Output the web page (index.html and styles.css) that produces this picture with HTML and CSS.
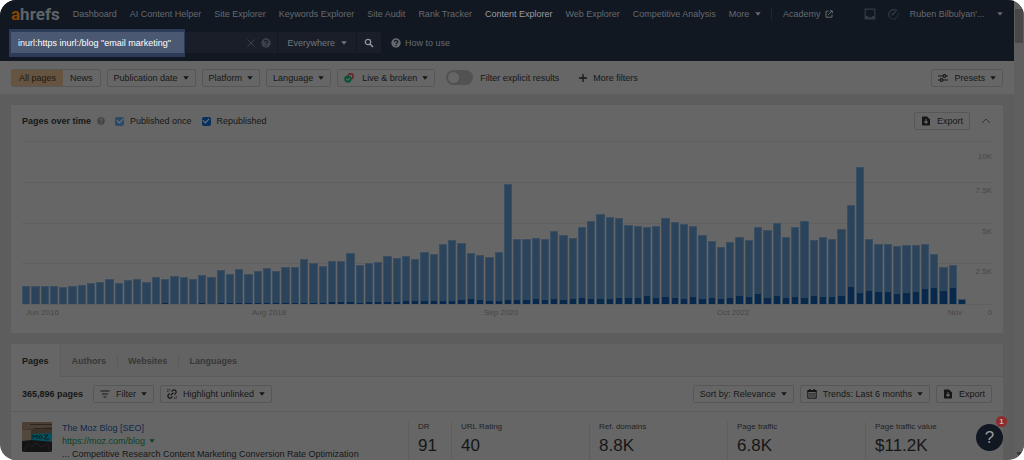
FILE: index.html
```html
<!DOCTYPE html>
<html lang="en">
<head>
<meta charset="utf-8">
<title>Content Explorer</title>
<link rel="stylesheet" href="styles.css">
</head>
<body>
<svg class="sprite" aria-hidden="true">
  <symbol id="caret" viewBox="0 0 6 4"><path d="M.3.3h5.4L3 3.8z" fill="currentColor"/></symbol>
  <symbol id="help" viewBox="0 0 10 10"><circle cx="5" cy="5" r="4.7" fill="currentColor"/><path d="M3.4 4c0-2.2 3.3-2.1 3.3-.2C6.700 5 5 5 5 6.100" fill="none" stroke="var(--hole)" stroke-width="1.200"/><circle cx="5" cy="7.600" r=".75" fill="var(--hole)"/></symbol>
  <symbol id="file" viewBox="0 0 10 10"><path d="M1 1.300Q1 .5 1.800.5H6l3 3v5.200q0 .8-.8.8H1.800Q1 9.500 1 8.700z" fill="currentColor"/><path d="M5 3v4M3.300 5.500 5 7.200l1.700-1.700" fill="none" stroke="#666" stroke-width="1.100"/></symbol>
</svg>
<div class="screen">
  <div class="page">
    <header class="header">
      <nav class="nav">
        <a class="logo" href="#"><span class="logo-a">a</span>hrefs</a>
        <a href="#">Dashboard</a>
        <a href="#">AI Content Helper</a>
        <a href="#">Site Explorer</a>
        <a href="#">Keywords Explorer</a>
        <a href="#">Site Audit</a>
        <a href="#">Rank Tracker</a>
        <a class="current" href="#">Content Explorer</a>
        <a href="#">Web Explorer</a>
        <a href="#">Competitive Analysis</a>
        <a href="#">More <svg class="caret"><use href="#caret"/></svg></a>
        <a class="academy" href="#">Academy <svg class="icon-s" viewBox="0 0 8 8"><path d="M3.500 1.200H1v6h6V4.700M3 5l4-4M4.800.8h2.500v2.500" fill="none" stroke="currentColor"/></svg></a>
        <div class="account">
          <svg class="icon-l" viewBox="0 0 12 12"><path d="M1.200 1.200h9.600v9.600H1.200z" fill="none" stroke="currentColor" stroke-width="1.200"/><path d="M1 8h2.700l1 1.300h2.600l1-1.300H11v3H1z" fill="currentColor"/></svg>
          <svg class="icon-l" viewBox="0 0 12 12"><path d="M10 2.800A5 5 0 1 0 3.500 10.400" fill="none" stroke="currentColor" stroke-width="1.200"/><path d="M4.500 10.800A5 5 0 0 0 11 5" fill="none" stroke="currentColor" stroke-width="1.200" stroke-dasharray="1.500 1.200"/><path d="M5.200 6.700 8.700 3.500" stroke="currentColor" stroke-width="1.300"/><circle cx="5.500" cy="6.500" r="1.100" fill="currentColor"/></svg>
          <a class="user" href="#">Ruben Bilbulyan'... <svg class="caret"><use href="#caret"/></svg></a>
        </div>
      </nav>
      <form class="search">
        <div class="query">
          <input type="text" aria-label="Search query" value="inurl:https inurl:/blog &quot;email marketing&quot;">
          <button type="button" class="plain" aria-label="Clear"><svg class="icon" viewBox="0 0 10 10"><path d="m1.500 1.500 7 7m0-7-7 7" stroke="currentColor"/></svg></button>
          <svg class="icon"><use href="#help"/></svg>
        </div>
        <button type="button" class="scope">Everywhere <svg class="caret"><use href="#caret"/></svg></button>
        <button type="button" class="go" aria-label="Search"><svg class="icon" viewBox="0 0 10 10"><circle cx="4" cy="4" r="2.700" fill="none" stroke="currentColor" stroke-width="1.300"/><path d="m6 6 3 3" stroke="currentColor" stroke-width="1.600"/></svg></button>
        <a class="howto" href="#"><svg class="icon"><use href="#help"/></svg>How to use</a>
      </form>
    </header>

    <div class="filters">
      <div class="segment"><button type="button" class="on">All pages</button><button type="button">News</button></div>
      <button type="button" class="btn">Publication date <svg class="caret"><use href="#caret"/></svg></button>
      <button type="button" class="btn">Platform <svg class="caret"><use href="#caret"/></svg></button>
      <button type="button" class="btn">Language <svg class="caret"><use href="#caret"/></svg></button>
      <button type="button" class="btn live"><svg class="icon" viewBox="0 0 10 10"><circle cx="6.700" cy="3.300" r="2.500" fill="none" stroke="#6d1f24" stroke-width="1.500"/><circle cx="3.900" cy="6.100" r="3.700" fill="#0b5135"/><path d="m2.300 6.100 1.200 1.200 2.200-2.300" fill="none" stroke="#777"/></svg>Live &amp; broken <svg class="caret"><use href="#caret"/></svg></button>
      <label class="explicit"><input class="switch" type="checkbox" role="switch">Filter explicit results</label>
      <button type="button" class="plain more"><svg class="icon" viewBox="0 0 10 10"><path d="M5 1v8M1 5h8" stroke="currentColor" stroke-width="1.300"/></svg>More filters</button>
      <button type="button" class="btn presets"><svg class="icon" viewBox="0 0 10 10"><path d="M0 3h5m3 0h2M0 7h2m3 0h5" stroke="currentColor" stroke-width="1.200"/><circle cx="6.500" cy="3" r="1.400" fill="none" stroke="currentColor" stroke-width="1.100"/><circle cx="3.500" cy="7" r="1.400" fill="none" stroke="currentColor" stroke-width="1.100"/></svg>Presets <svg class="caret"><use href="#caret"/></svg></button>
    </div>

    <main class="content">
      <section class="card chart-card">
        <div class="chart-head">
          <h2>Pages over time</h2>
          <svg class="icon-m"><use href="#help"/></svg>
          <label><input class="tick once" type="checkbox" checked>Published once</label>
          <label><input class="tick again" type="checkbox" checked>Republished</label>
          <button type="button" class="btn export"><svg class="icon"><use href="#file"/></svg>Export</button>
          <button type="button" class="plain fold" aria-label="Collapse"><svg class="icon" viewBox="0 0 10 10"><path d="M1 7l4-4 4 4" fill="none" stroke="currentColor"/></svg></button>
        </div>
        <div class="chart">
          <div class="grid"><span>10K</span><span>7.5K</span><span>5K</span><span>2.5K</span></div>
          <div class="bars" id="bars"></div>
        </div>
        <div class="axis"><span>Jun 2016</span><span>Aug 2018</span><span>Sep 2020</span><span>Oct 2022</span><span>Nov</span><span class="zero">0</span></div>
      </section>

      <section class="card">
        <div class="tabs">
          <button type="button" class="tab active">Pages</button>
          <button type="button" class="tab">Authors</button>
          <button type="button" class="tab">Websites</button>
          <button type="button" class="tab">Languages</button>
        </div>
        <div class="toolbar">
          <strong>365,896 pages</strong>
          <button type="button" class="btn"><svg class="icon" viewBox="0 0 10 10"><path d="M.5 2h9M2 5h6M3.500 8h3" stroke="currentColor" stroke-width="1.200"/></svg>Filter <svg class="caret"><use href="#caret"/></svg></button>
          <button type="button" class="btn"><svg class="icon" viewBox="0 0 10 10"><path d="M4.500 2.500 5.800 1.300q1.500-1 2.700.2t.2 2.700L7.400 5.500M5.500 7.500 4.200 8.700q-1.500 1-2.700-.2t-.2-2.700L2.600 4.500M3.600 6.400l2.800-2.800" fill="none" stroke="currentColor" stroke-width="1.200"/><path d="M.3.800h1.200M.3 2.600h1M2.600.3v1M8.500 9.200h1.200M8.700 7.400h1M7.400 8.700v1" stroke="currentColor"/></svg>Highlight unlinked <svg class="caret"><use href="#caret"/></svg></button>
          <button type="button" class="btn sort">Sort by: Relevance <svg class="caret"><use href="#caret"/></svg></button>
          <button type="button" class="btn"><svg class="icon" viewBox="0 0 10 10"><path d="M.8 1.500h8.400v7.700H.8z" fill="none" stroke="currentColor"/><path d="M.5 2.300h9M2.800 0v2M7.200 0v2" stroke="currentColor" stroke-width="1.400"/><path d="M2.300 4.800h5.600M2.300 7h5.600" stroke="currentColor" stroke-width="1.200" stroke-dasharray="1.400 .7"/></svg>Trends: Last 6 months <svg class="caret"><use href="#caret"/></svg></button>
          <button type="button" class="btn"><svg class="icon"><use href="#file"/></svg>Export</button>
        </div>
        <article class="result">
          <svg class="thumb" viewBox="0 0 30 30">
            <rect width="30" height="30" fill="#3b3128"/><path d="M0 0h30v5L0 8z" fill="#4b3e34"/><path d="M8 2h22v1H8zM12 6h18v1H12z" fill="#2a2522"/><path d="M0 8h9v12H0z" fill="#51483e"/><path d="M10 12l20-1v8H10z" fill="#06505c"/><path d="M11 17v-4l2 2 2-2v4m2-2a1.500 1.500 0 1 0 3 0 1.500 1.500 0 1 0-3 0m5-2h4l-4 4h5" fill="none" stroke="#0a1a20"/><path d="M0 19l10-1 20 2v10H0z" fill="#141416"/><path d="M2 30l4-8 4 3 4-4 5 4 7-3 2 8" fill="none" stroke="#222122"/>
          </svg>
          <div class="summary">
            <a class="title" href="#">The Moz Blog [SEO]</a>
            <a class="url" href="#">https://moz.com/blog <svg class="caret"><use href="#caret"/></svg></a>
            <p>... Competitive Research Content Marketing Conversion Rate Optimization</p>
          </div>
          <dl class="metrics">
            <div><dt>DR</dt><dd>91</dd></div>
            <div><dt>URL Rating</dt><dd>40</dd></div>
            <div><dt>Ref. domains</dt><dd>8.8K</dd></div>
            <div><dt>Page traffic</dt><dd>6.8K</dd></div>
            <div><dt>Page traffic value</dt><dd>$11.2K</dd></div>
          </dl>
        </article>
      </section>
    </main>
  </div>
  <div class="scrollbar"><div class="thumb-bar"></div><svg class="caret"><use href="#caret"/></svg></div>
  <button type="button" class="help" aria-label="Help">?<span class="badge">1</span></button>
</div>
<script src="chart.js"></script>
</body>
</html>
```
FILE: styles.css
```css
* { box-sizing: border-box; }
body { margin: 0; background: #fff; color: #161616; font: 9px/12px "Liberation Sans", Arial, sans-serif; }
button, input { font: inherit; color: inherit; margin: 0; }
button { padding: 0; border: 0; background: none; white-space: nowrap; }
a { color: inherit; text-decoration: none; white-space: nowrap; }
h2, p, dl, dd { margin: 0; }
svg { flex: none; }
.sprite { position: absolute; width: 0; height: 0; }
.caret { width: 6px; height: 4px; margin-left: 3px; vertical-align: 1px; }
.icon { width: 10px; height: 10px; }
.icon-s { width: 8px; height: 8px; margin-left: 2px; vertical-align: -1px; }
.icon-m { width: 8px; height: 8px; margin-left: 1px; color: #444; --hole: #666; }
.icon-l { width: 12px; height: 12px; color: #343a43; }
.plain { display: flex; align-items: center; }

.screen { position: relative; display: flex; height: 100vh; overflow: hidden; border-radius: 16px; background: #5d5d5d; }
.page { flex: 1; min-width: 0; }

.header { height: 61px; padding: 0 11px; background: #111822; color: #666a70; }
.nav { display: flex; align-items: center; gap: 13px; height: 28px; }
.logo { font: bold 17px/18px Roboto, sans-serif; color: #5f6369; }
.logo-a { color: #874600; }
.current { color: #999da3; }
.academy { margin-left: -3px; padding-left: 11px; border-left: 1px solid #20262f; }
.account { display: flex; align-items: center; gap: 11px; margin-left: auto; }
.user .caret { margin-left: 10px; }

.search { display: flex; align-items: center; gap: 1px; margin-top: 4px; height: 21px; }
.query { display: flex; align-items: center; gap: 5px; width: 266px; height: 21px; padding-right: 6px; border-radius: 2px 0 0 2px; background: #191e28; color: #3e434b; --hole: #191e28; }
.query input { width: 176px; height: 28px; margin: -3px auto -4px -2px; padding: 0 0 0 7px; border: solid #2c3b57; border-width: 3px 1px 4px 2px; background: #4a5872; color: #fff; outline: 0; }
.scope, .go { height: 21px; background: #191e28; color: #73777d; }
.scope { width: 78px; }
.go { display: flex; align-items: center; justify-content: center; width: 24px; border-radius: 0 2px 2px 0; color: #92969b; }
.howto { display: flex; align-items: center; gap: 4px; margin-left: 9px; --hole: #111822; }

.filters { display: flex; align-items: center; gap: 6px; height: 33px; padding: 0 11px; background: #666; }
.btn { display: flex; align-items: center; height: 18px; padding: 0 6px; border: 1px solid #575757; border-radius: 2px; }
.btn > .icon { margin-right: 6px; }
.btn > .caret { margin-left: 5px; }
.segment { display: flex; height: 18px; border: 1px solid #575757; border-radius: 2px; }
.segment button { padding: 0 7px; }
.segment .on { background: #665340; color: #1e1812; }
.live > .icon { margin-right: 8px; }
.explicit { display: flex; align-items: center; gap: 7px; margin-left: 5px; }
.switch { appearance: none; display: flex; width: 27px; height: 15px; padding: 2px; border-radius: 8px; background: #525252; }
.switch::before { content: ""; width: 11px; height: 11px; border-radius: 50%; background: #666; }
.more { gap: 5px; margin-left: 13px; }
.presets { margin-left: auto; }

.content { display: flex; flex-direction: column; gap: 11px; padding: 11px 11px 0; }
.card { background: #666; }
.chart-card { padding: 0 11px 14px; }
.chart-head { display: flex; align-items: center; gap: 5px; height: 32px; }
.chart-head h2 { font-size: 9px; }
.chart-head label { display: flex; align-items: center; gap: 6px; margin-left: 5px; }
.tick { appearance: none; display: grid; place-items: center; width: 9px; height: 9px; border-radius: 2px; }
.tick::before { content: ""; width: 5px; height: 3px; border: solid #777; border-width: 0 0 1px 1px; transform: translateY(-1px) rotate(-45deg); }
.once { background: #2b4a68; }
.again { background: #08305c; }
.export { margin-left: auto; }
.fold { margin-left: 6px; width: 11px; color: #333; }
.chart { position: relative; display: flex; height: 164px; margin-top: 4px; border-bottom: 1px solid #5f5f5f; }
.grid { position: absolute; inset: 0; display: grid; grid-template-rows: repeat(4, 1fr); }
.grid span { border-top: 1px solid #5f5f5f; padding-top: 2px; font-size: 8px; color: #474747; text-align: right; }
.grid span:first-child { padding-top: 9px; }
.bars { position: relative; display: flex; gap: 1px; width: 97.400%; padding-top: 1px; align-items: flex-end; }
.bar { display: flex; flex: 1; align-items: flex-end; border: 1px solid #3c4f61; border-bottom: 0; background: #2b435b; }
.bar i { width: 100%; background: #09294c; }
.axis { position: relative; display: grid; grid-template-columns: 226px 232px 233px 1fr auto 30px; padding-left: 4px; margin-top: 2px; font-size: 8px; color: #474747; }
.zero { text-align: right; }

.tabs { display: flex; height: 33px; border-bottom: 1px solid #5d5d5d; background: #636363; }
.tab { height: 33px; padding: 0 11px; font-weight: bold; color: #383838; }
.tab.active { background: #666; color: #161616; border-right: 1px solid #5d5d5d; }
.tab:not(.active) + .tab { background: linear-gradient(#5a5a5a, #5a5a5a) left center / 1px 12px no-repeat; }
.toolbar { display: flex; align-items: center; gap: 6px; height: 35px; padding: 0 11px; border-bottom: 1px solid #5d5d5d; }
.toolbar strong { margin-right: 4px; }
.sort { margin-left: auto; }
.result { display: flex; padding: 10px 11px 0; }
.thumb { width: 30px; height: 30px; border-radius: 2px; }
.summary { display: flex; flex: 1; flex-direction: column; gap: 1px; min-width: 0; padding-left: 10px; white-space: nowrap; }
.title { color: #0f294b; }
.url { color: #08432a; }
.url .caret { margin-left: 1px; }
.metrics { display: grid; grid-template-columns: 43px 138px 138px 138px 127px; }
.metrics div { height: 60px; padding-left: 9px; border-left: 1px solid #5d5d5d; }
.metrics dt { font-size: 8px; line-height: 10px; color: #222; }
.metrics dd { padding-top: 4px; font-size: 17px; line-height: 20px; }

.scrollbar { display: flex; flex-direction: column; align-items: center; justify-content: space-between; width: 10px; padding: 9px 1px 4px; background: #5f5f5f; }
.scrollbar .caret { margin: 0; color: #333; }
.thumb-bar { width: 100%; height: 34px; background: #484848; }
.help { position: absolute; right: 21px; bottom: 9px; width: 27px; height: 27px; border-radius: 50%; background: #111822; color: #999; font-size: 17px; }
.badge { position: absolute; top: -8px; right: -4px; width: 11px; height: 11px; border-radius: 50%; background: #8f2a2d; color: #bbb; font: bold 8px/11px "Liberation Sans", sans-serif; }
```
FILE: chart.js
```js
// Monthly totals and the republished share, in thirds of a step; SCALE is 10K.
const SCALE = 490;
const total = [
  55, 53, 56, 53, 51, 56, 57, 64, 67, 76, 65, 72, 76, 68, 81, 77, 86, 82, 75, 88,
  83, 104, 92, 107, 92, 101, 110, 100, 113, 112, 137, 123, 116, 131, 131, 153, 119,
  124, 128, 145, 140, 146, 137, 157, 152, 183, 195, 185, 153, 149, 143, 156, 362,
  197, 197, 201, 198, 220, 209, 201, 232, 251, 272, 263, 260, 240, 237, 232, 237,
  260, 248, 241, 235, 208, 191, 172, 189, 202, 193, 232, 223, 245, 202, 232, 250,
  194, 202, 197, 226, 301, 415, 196, 182, 183, 175, 177, 177, 181, 152, 112, 119, 14
];
const again = [
  0, 0, 0, 0, 0, 0, 0, 0, 0, 0, 0, 0, 0, 0, 0, 3, 0, 0, 0, 3, 0, 3, 3, 3, 3, 3, 3,
  3, 3, 3, 3, 4, 4, 5, 5, 5, 4, 6, 7, 6, 7, 8, 8, 9, 9, 9, 8, 12, 17, 12, 9, 10, 12,
  12, 12, 15, 12, 14, 12, 14, 17, 14, 14, 14, 17, 17, 17, 24, 17, 21, 17, 14, 22,
  14, 19, 14, 20, 24, 23, 31, 19, 26, 19, 22, 19, 24, 23, 22, 26, 51, 33, 39, 37,
  37, 30, 33, 37, 45, 50, 41, 50, 14
];
document.getElementById("bars").innerHTML = total.map((value, i) =>
  `<div class="bar" style="height:${value / SCALE * 100}%"><i style="height:${again[i] / value * 100}%"></i></div>`
).join("");
```
